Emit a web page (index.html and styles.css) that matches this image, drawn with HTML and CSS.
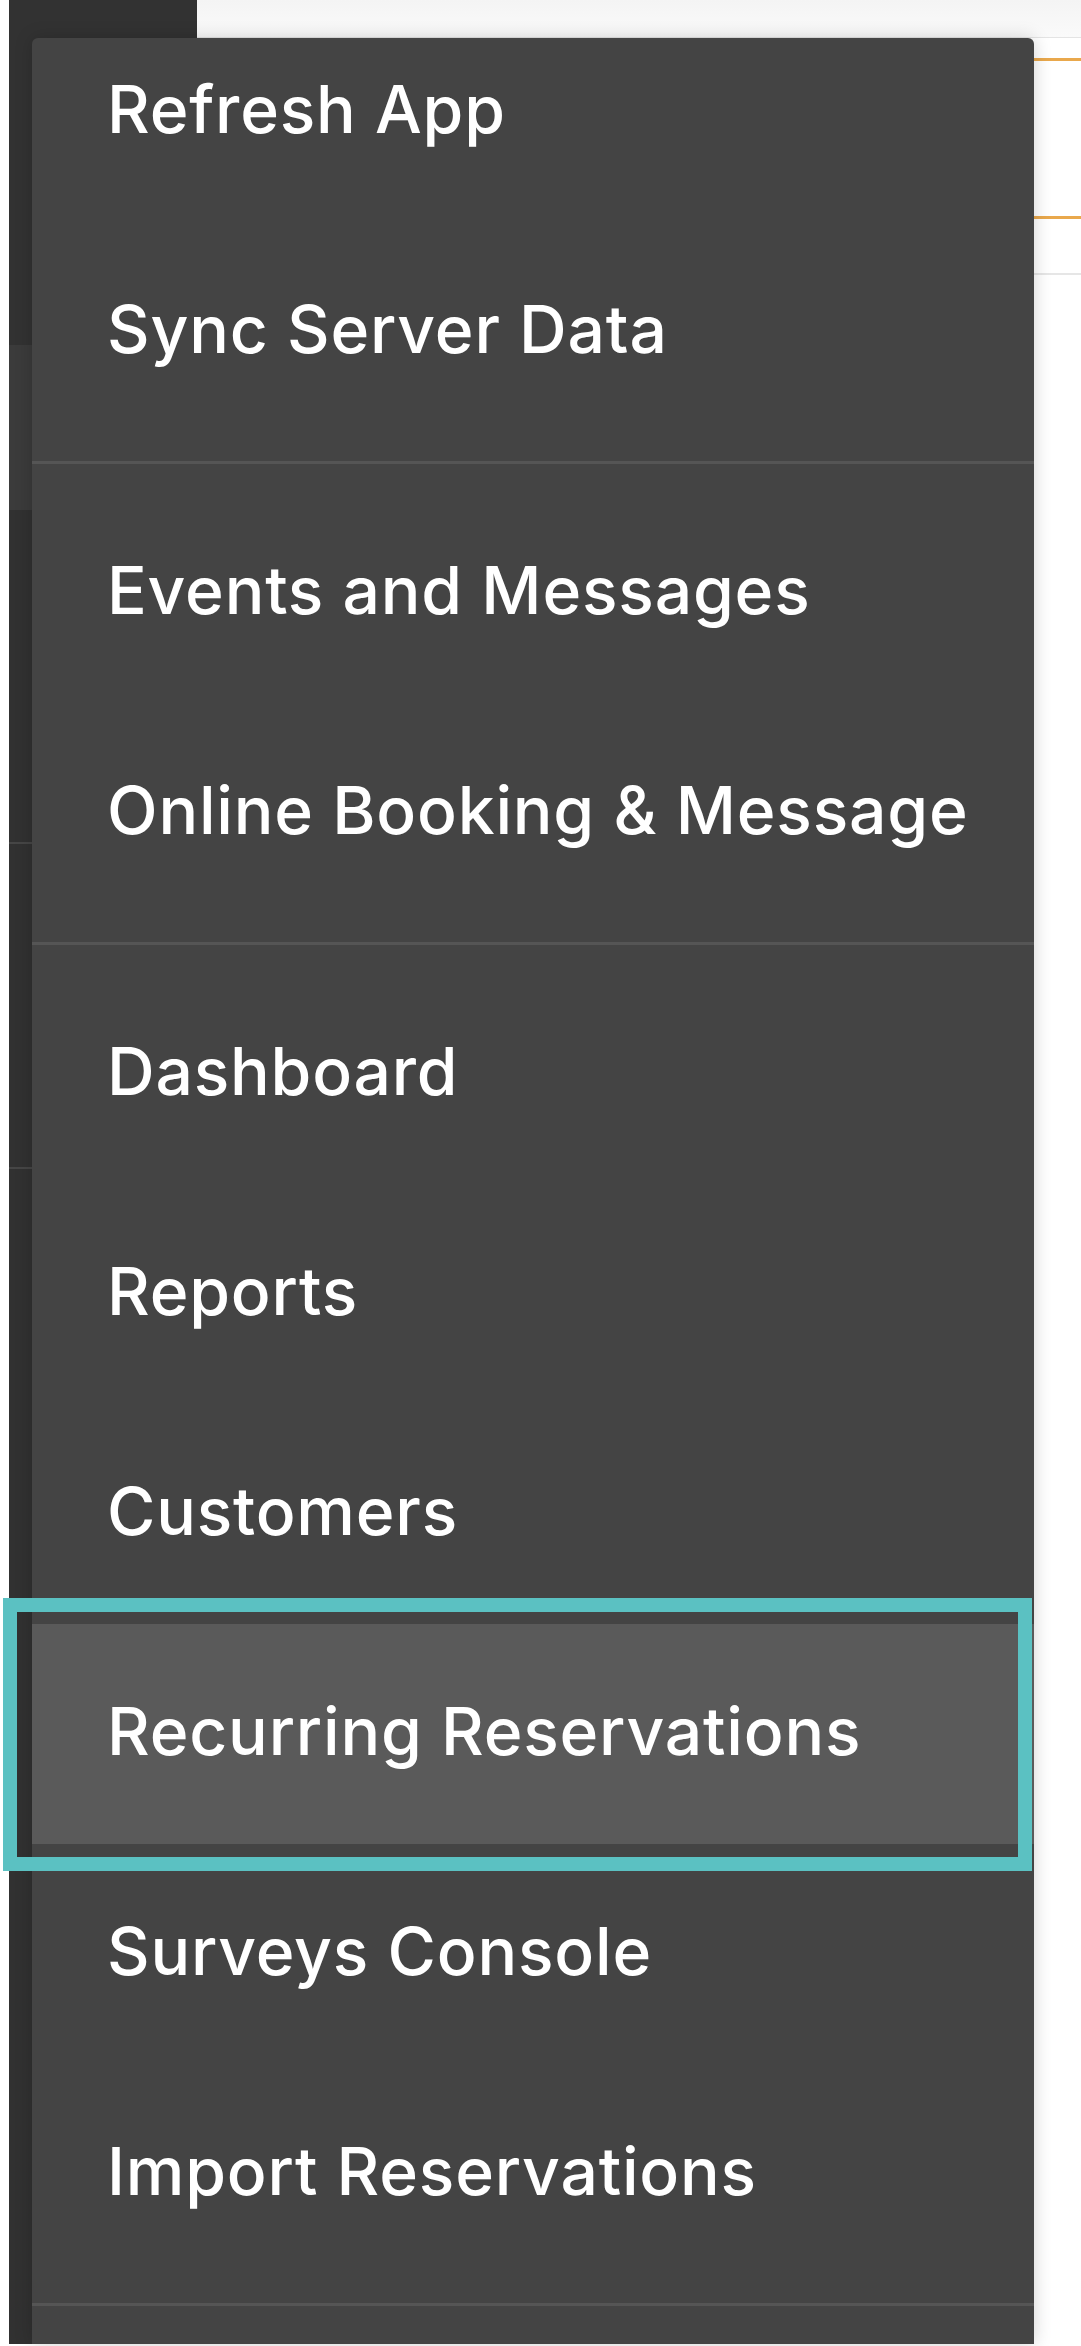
FILE: index.html
```html
<!DOCTYPE html>
<html lang="en">
<head>
    <meta charset="UTF-8">
    <meta name="viewport" content="width=device-width, initial-scale=1.0">
    <title>Reservations</title>
    <link rel="stylesheet" href="styles.css">
</head>
<body>
    <div class="app">
        <aside class="sidebar">
            <div class="side-block side-a"></div>
            <div class="side-block side-b"></div>
            <div class="side-block side-c"></div>
            <div class="side-block side-d"></div>
            <div class="side-block side-e"></div>
        </aside>
        <main class="content">
            <div class="topbar"></div>
            <div class="booking-card"></div>
            <div class="row-line"></div>
        </main>
    </div>

    <!-- App menu dropdown -->
    <nav class="app-menu">
        <div class="menu-list">
            <div class="menu-item">Refresh App</div>
            <div class="menu-item">Sync Server Data</div>
            <div class="menu-sep"></div>
            <div class="menu-item">Events and Messages</div>
            <div class="menu-item">Online Booking &amp; Message</div>
            <div class="menu-sep"></div>
            <div class="menu-item">Dashboard</div>
            <div class="menu-item">Reports</div>
            <div class="menu-item">Customers</div>
            <div class="menu-item active">Recurring Reservations</div>
            <div class="menu-item">Surveys Console</div>
            <div class="menu-item">Import Reservations</div>
            <div class="menu-sep"></div>
            <div class="menu-item"></div>
        </div>
    </nav>

    <div class="focus-ring"></div>
</body>
</html>
```

FILE: styles.css
```css
/* Page */
body {
    margin: 0;
    height: 2346px;
    background-color: #fff;
    font-family: Inter, "Open Sans", sans-serif;
    overflow: hidden;
    position: relative;
}

.app {
    display: flex;
    height: 2344px;
    padding-left: 9px;
}

/* Left sidebar */
.sidebar {
    width: 188px;
    display: flex;
    flex-direction: column;
    background-color: #313131;
}

.side-a {
    height: 345px;
    background-color: #323232;
}

.side-b {
    height: 165px;
    background-color: #3b3b3b;
}

.side-c {
    height: 332px;
    border-bottom: 2px solid #464646;
}

.side-d {
    height: 323px;
    border-bottom: 2px solid #464646;
}

.side-e {
    flex: 1;
}

/* Main content behind the menu */
.content {
    flex: 1;
    display: flex;
    flex-direction: column;
}

.topbar {
    height: 37px;
    background: linear-gradient(#f4f4f4, #fafafa);
    border-bottom: 1px solid #e4e4e4;
}

.booking-card {
    margin-top: 20px;
    height: 155px;
    border-top: 3px solid #e9a84c;
    border-bottom: 3px solid #e9a84c;
}

.row-line {
    margin-top: 54px;
    height: 2px;
    background-color: #e6e6e6;
}

/* Dropdown menu */
.app-menu {
    position: absolute;
    left: 32px;
    top: 38px;
    width: 1002px;
    bottom: 2px;
    background-color: #444;
    border-radius: 6px 6px 0 0;
    overflow: hidden;
    box-shadow: 0 0 18px rgba(0, 0, 0, 0.18);
}

.menu-list {
    margin-top: -36px;
}

.menu-item {
    height: 220px;
    line-height: 214px;
    padding-left: 75px;
    color: #fff;
    font-size: 66px;
    font-weight: 500;
    letter-spacing: 0.8px;
    white-space: nowrap;
}

.menu-item.active {
    background-color: #5a5a5a;
}

.menu-sep {
    height: 3px;
    margin: 19px 0;
    background-color: #555;
}

/* Teal outline around the current entry */
.focus-ring {
    position: absolute;
    left: 3px;
    top: 1598px;
    width: 1029px;
    height: 273px;
    box-sizing: border-box;
    border: 14px solid #5bc1c2;
}
```
